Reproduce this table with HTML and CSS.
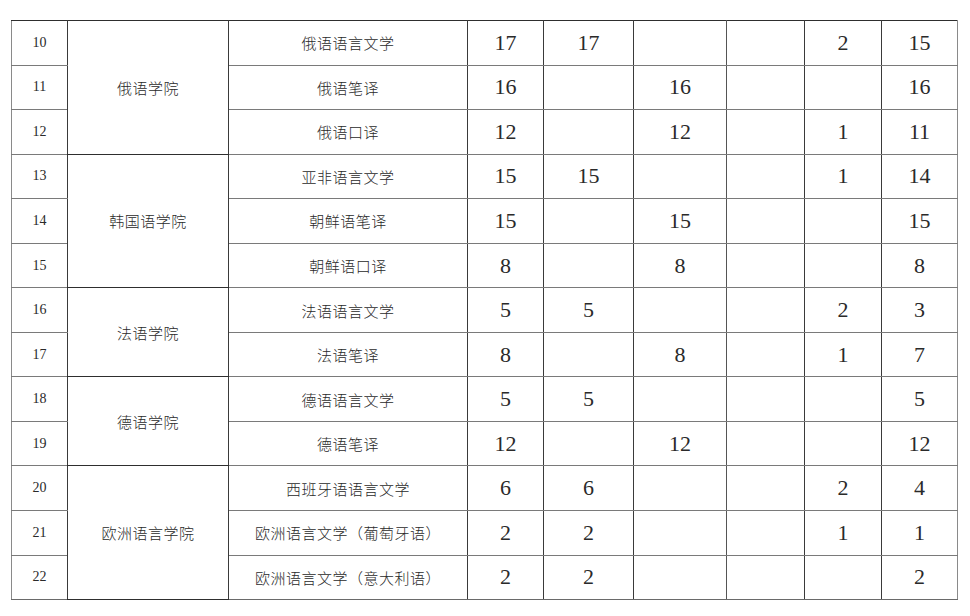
FILE: index.html
```html
<!DOCTYPE html>
<html lang="zh-CN">
<head>
<meta charset="utf-8">
<title>招生计划</title>
<link rel="stylesheet" href="styles.css">
</head>
<body>
<table class="plan">
  <colgroup>
    <col class="w-no"><col class="w-school"><col class="w-major"><col class="w-n1"><col class="w-n2"><col class="w-n3"><col class="w-n4"><col class="w-n5"><col class="w-n6">
  </colgroup>
  <tbody>
    <tr class="grp">
      <td class="no">10</td>
      <td class="school" rowspan="3">俄语学院</td>
      <td class="major">俄语语言文学</td>
      <td class="num">17</td><td class="num c5">17</td><td class="num c6"></td><td class="num c7"></td><td class="num c8">2</td><td class="num c9">15</td>
    </tr>
    <tr>
      <td class="no">11</td>
      <td class="major">俄语笔译</td>
      <td class="num">16</td><td class="num c5"></td><td class="num c6">16</td><td class="num c7"></td><td class="num c8"></td><td class="num c9">16</td>
    </tr>
    <tr>
      <td class="no">12</td>
      <td class="major">俄语口译</td>
      <td class="num">12</td><td class="num c5"></td><td class="num c6">12</td><td class="num c7"></td><td class="num c8">1</td><td class="num c9">11</td>
    </tr>
    <tr class="grp">
      <td class="no">13</td>
      <td class="school" rowspan="3">韩国语学院</td>
      <td class="major">亚非语言文学</td>
      <td class="num">15</td><td class="num c5">15</td><td class="num c6"></td><td class="num c7"></td><td class="num c8">1</td><td class="num c9">14</td>
    </tr>
    <tr>
      <td class="no">14</td>
      <td class="major">朝鲜语笔译</td>
      <td class="num">15</td><td class="num c5"></td><td class="num c6">15</td><td class="num c7"></td><td class="num c8"></td><td class="num c9">15</td>
    </tr>
    <tr>
      <td class="no">15</td>
      <td class="major">朝鲜语口译</td>
      <td class="num">8</td><td class="num c5"></td><td class="num c6">8</td><td class="num c7"></td><td class="num c8"></td><td class="num c9">8</td>
    </tr>
    <tr class="grp">
      <td class="no">16</td>
      <td class="school" rowspan="2">法语学院</td>
      <td class="major">法语语言文学</td>
      <td class="num">5</td><td class="num c5">5</td><td class="num c6"></td><td class="num c7"></td><td class="num c8">2</td><td class="num c9">3</td>
    </tr>
    <tr>
      <td class="no">17</td>
      <td class="major">法语笔译</td>
      <td class="num">8</td><td class="num c5"></td><td class="num c6">8</td><td class="num c7"></td><td class="num c8">1</td><td class="num c9">7</td>
    </tr>
    <tr class="grp">
      <td class="no">18</td>
      <td class="school" rowspan="2">德语学院</td>
      <td class="major">德语语言文学</td>
      <td class="num">5</td><td class="num c5">5</td><td class="num c6"></td><td class="num c7"></td><td class="num c8"></td><td class="num c9">5</td>
    </tr>
    <tr>
      <td class="no">19</td>
      <td class="major">德语笔译</td>
      <td class="num">12</td><td class="num c5"></td><td class="num c6">12</td><td class="num c7"></td><td class="num c8"></td><td class="num c9">12</td>
    </tr>
    <tr class="grp">
      <td class="no">20</td>
      <td class="school" rowspan="3">欧洲语言学院</td>
      <td class="major">西班牙语语言文学</td>
      <td class="num">6</td><td class="num c5">6</td><td class="num c6"></td><td class="num c7"></td><td class="num c8">2</td><td class="num c9">4</td>
    </tr>
    <tr>
      <td class="no">21</td>
      <td class="major">欧洲语言文学（葡萄牙语）</td>
      <td class="num">2</td><td class="num c5">2</td><td class="num c6"></td><td class="num c7"></td><td class="num c8">1</td><td class="num c9">1</td>
    </tr>
    <tr class="last">
      <td class="no">22</td>
      <td class="major">欧洲语言文学（意大利语）</td>
      <td class="num">2</td><td class="num c5">2</td><td class="num c6"></td><td class="num c7"></td><td class="num c8"></td><td class="num c9">2</td>
    </tr>
  </tbody>
</table>
</body>
</html>
```

FILE: styles.css
```css
html, body {
  margin: 0;
  padding: 0;
  background: #ffffff;
}

body {
  padding: 20px 0 0 11px;
  font-family: "Noto Sans CJK SC", "Liberation Serif", serif;
  color: #2a2a2a;
}

.plan {
  border-collapse: collapse;
  table-layout: fixed;
  width: 947px;
}

.w-no { width: 56px; }
.w-school { width: 161px; }
.w-major { width: 239px; }
.w-n1 { width: 76px; }
.w-n2 { width: 90px; }
.w-n3 { width: 93px; }
.w-n4 { width: 78px; }
.w-n5 { width: 77px; }
.w-n6 { width: 76px; }

.plan tr {
  height: 44.55px;
}

.plan td {
  padding: 0;
  text-align: center;
  vertical-align: middle;
  border: 1px solid #3a3a3a;
  border-top-color: #7a7a7a;
  border-bottom-color: #7a7a7a;
}

.plan tr.grp td {
  border-top-color: #2e2e2e;
}

.plan tr.last td {
  border-bottom-color: #6a6a6a;
}

.plan td.school {
  border-top-color: #2e2e2e;
  border-bottom-color: #2e2e2e;
}

.no {
  font-family: "Liberation Serif", serif;
  font-size: 14px;
  border-left-color: #8a8a8a !important;
}

.school,
.major {
  font-size: 15px;
  letter-spacing: 0.5px;
  font-weight: 300;
}

.num {
  font-family: "Liberation Serif", serif;
  font-size: 22px;
}

.plan td.c6 {
  border-left-color: #b4b4b4;
  border-right-color: #555;
}

.plan td.c8 {
  border-left-color: #666;
}

.plan td.c9 {
  border-right-color: #8a8a8a;
}
```
